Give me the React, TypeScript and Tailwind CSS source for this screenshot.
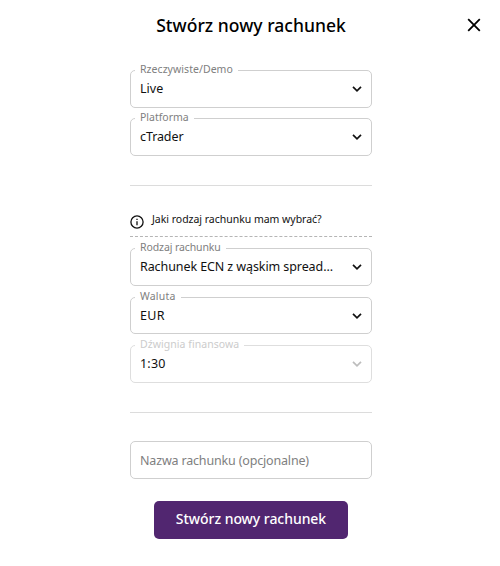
import clsx from "clsx";

type SelectFieldProps = {
  label: string;
  value: string;
  height?: string;
  labelClass?: string;
  valueClass?: string;
  className?: string;
  disabled?: boolean;
};

function SelectField({
  label,
  value,
  height = "h-[38px]",
  labelClass,
  valueClass,
  className,
  disabled,
}: SelectFieldProps) {
  return (
    <div
      className={clsx(
        "relative flex items-center justify-between px-[9px] border rounded-[5px]",
        height,
        disabled ? "border-[#dedede]" : "border-[#cfcfcf]",
        className
      )}
    >
      <span
        className={clsx(
          "absolute left-1 -top-[9px] px-[5px] bg-white text-[10.5px] leading-[14px] whitespace-nowrap",
          disabled ? "text-[#cccccc]" : "text-[#808080]",
          labelClass
        )}
      >
        {label}
      </span>
      <span className={clsx("text-[12.5px] leading-[18px] text-[#111] whitespace-nowrap", valueClass)}>{value}</span>
      <svg
        viewBox="0 0 10 6"
        className={clsx("w-[10px] h-[6px] shrink-0", disabled ? "text-[#bdbdbd]" : "text-[#111]")}
        fill="none"
        stroke="currentColor"
        strokeWidth="1.7"
      >
        <path d="M1 0.8 5 4.8 9 0.8" />
      </svg>
    </div>
  );
}

export default function App() {
  return (
    <div className="relative w-[500px] h-[566px] overflow-hidden bg-white font-['Noto_Sans',sans-serif] text-[#111]">
      <h1 className="pt-[13px] pl-0.5 text-center text-[17.5px] leading-[24px] font-medium tracking-[0.03px] text-black">
        Stwórz nowy rachunek
      </h1>
      <button aria-label="Zamknij" className="absolute left-[467px] top-[18px]">
        <svg viewBox="0 0 14 14" className="w-[14px] h-[14px]" fill="none" stroke="#000" strokeWidth="1.8">
          <path d="M1.2 1.2 12.8 12.8M12.8 1.2 1.2 12.8" />
        </svg>
      </button>

      <div className="w-[242px] ml-[130px] mt-[33px]">
        {/* Account mode */}
        <SelectField label="Rzeczywiste/Demo" value="Live" labelClass="tracking-[0.05px]" />
        <SelectField label="Platforma" value="cTrader" valueClass="tracking-[-0.1px]" className="mt-[10px]" />

        <hr className="mt-[29px] border-[#dcdcdc]" />

        {/* Account type hint */}
        <div className="flex h-[51px] pt-[26px] border-b border-dashed border-[#b5b5b5]">
          <svg viewBox="0 0 14 14" className="w-[14px] h-[14px] mt-[3px] shrink-0" fill="none" stroke="#111">
            <circle cx="7" cy="7" r="6.1" strokeWidth="1.3" />
            <path d="M7 6.2V10.2M7 3.8V5" strokeWidth="1.3" />
          </svg>
          <span className="ml-2 text-[10.5px] leading-[14px] tracking-[-0.02px] whitespace-nowrap">
            Jaki rodzaj rachunku mam wybrać?
          </span>
        </div>

        <SelectField
          label="Rodzaj rachunku"
          value="Rachunek ECN z wąskim spread..."
          labelClass="tracking-[-0.1px]"
          valueClass="tracking-[-0.09px]"
          className="mt-[11px]"
        />
        <SelectField
          label="Waluta"
          value="EUR"
          height="h-[37px]"
          labelClass="tracking-[0.2px]"
          valueClass="tracking-[0.3px]"
          className="mt-[11px]"
        />
        <SelectField
          label="Dźwignia finansowa"
          value="1:30"
          labelClass="tracking-[0.05px]"
          valueClass="tracking-[0.2px]"
          className="mt-[11px]"
          disabled
        />

        <hr className="mt-[29px] border-[#dcdcdc]" />

        <input
          className="block w-full h-[38px] mt-[28px] px-[9px] border border-[#cfcfcf] rounded-[5px] text-[12.5px] tracking-[-0.17px] placeholder:text-[#808080] outline-none"
          placeholder="Nazwa rachunku (opcjonalne)"
        />

        <button className="block w-[194px] h-[38px] mt-[22px] mx-auto pb-[3px] rounded-[5px] bg-[#512670] text-white text-[14px] font-medium tracking-[-0.05px]">
          Stwórz nowy rachunek
        </button>
      </div>
    </div>
  );
}
